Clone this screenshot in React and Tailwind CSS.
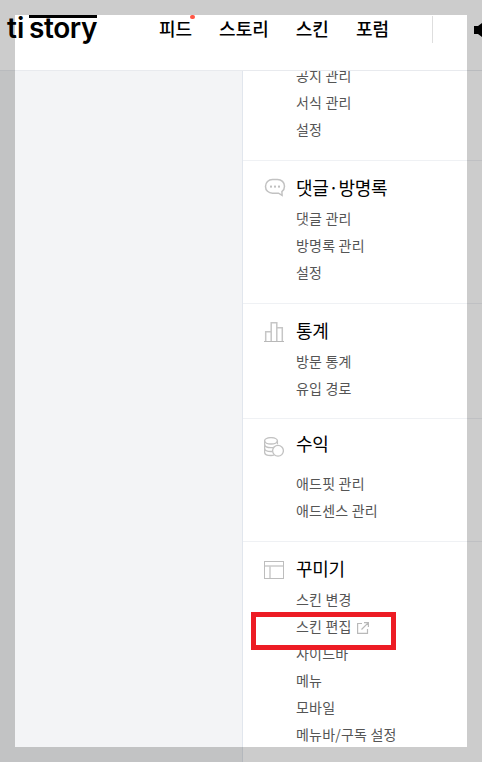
import React from "react";

const ChatIcon = () => (
  <svg width="22" height="20" viewBox="0 0 22 20" fill="none" stroke="#c2c2c2" strokeWidth="1.5">
    <path d="M8.500 1.500h5c4 0 7 2.800 7 6.800 0 2.400-1 4.200-2.600 5.400l.2 3.600-3.600-2.100H8.500c-4 0-7-2.800-7-6.800s3-6.900 7-6.900z" />
    <g fill="#c0c0c0" stroke="none">
      <rect x="6" y="7.600" width="2" height="2" />
      <rect x="10" y="7.600" width="2" height="2" />
      <rect x="14" y="7.600" width="2" height="2" />
    </g>
  </svg>
);

const ChartIcon = () => (
  <svg width="20" height="20" viewBox="0 0 20 20" fill="none" stroke="#c6c6c6">
    <path d="M1.700 19V9.700H7M7.200 19V.7h5.600V19M13 5.700h5.300V19" strokeWidth="1.500" />
    <path d="M0 19.500h20" stroke="#b8b8b8" />
  </svg>
);

const CoinsIcon = () => (
  <svg width="20" height="20" viewBox="0 0 20 20" fill="none" stroke="#c2c2c2" strokeWidth="1.300">
    <ellipse cx="7" cy="3.800" rx="6.400" ry="3.200" />
    <path d="M.6 3.800v11.500c0 1.900 2.900 3.200 6.400 3.200 1.200 0 2.200-.1 3.200-.5M13.400 3.800v3.500" />
    <path d="M.6 7.600c0 1.800 2.900 3.100 6.400 3.100 1.500 0 2.700-.2 3.700-.6M.6 11.400c0 1.800 2.900 3.100 6.400 3.100h1.400" />
    <circle cx="14" cy="13.800" r="5.400" fill="#fff" />
  </svg>
);

const LayoutIcon = () => (
  <svg width="20" height="18" viewBox="0 0 20 18" fill="none" stroke="#bdbdbd">
    <rect x=".5" y=".5" width="19" height="17" />
    <path d="M1 5h18M6 5v12" stroke="#cccccc" strokeWidth="1.500" />
  </svg>
);

const LinkIcon = () => (
  <svg width="12" height="12" viewBox="0 0 12 12" fill="none" stroke="#b9b9b9" strokeWidth="1.200">
    <path d="M5 1.500H.6v9.900h9.900V7M7 .6h4.400V5M11.400.6L4.500 7.500" />
  </svg>
);

const navItems = ["피드", "스토리", "스킨", "포럼"];

const sections = [
  {
    title: "댓글·방명록",
    icon: <ChatIcon />,
    box: "h-[143px] pt-[13px]",
    iconBox: "pt-[4px]",
    list: "mt-1",
    items: ["댓글 관리", "방명록 관리", "설정"],
  },
  {
    title: "통계",
    icon: <ChartIcon />,
    box: "h-[115px] pt-[13px]",
    iconBox: "pt-[5px]",
    list: "mt-1",
    items: ["방문 통계", "유입 경로"],
  },
  {
    title: "수익",
    icon: <CoinsIcon />,
    box: "h-[123px] pt-[11px]",
    iconBox: "pt-[7px]",
    list: "mt-[13px]",
    items: ["애드핏 관리", "애드센스 관리"],
  },
  {
    title: "꾸미기",
    icon: <LayoutIcon />,
    box: "h-[221px] pt-[13px]",
    iconBox: "pt-[6px]",
    list: "mt-1",
    items: ["스킨 변경", "스킨 편집", "사이드바", "메뉴", "모바일", "메뉴바/구독 설정"],
  },
];

const MenuItem = ({ label }) => (
  <li className="flex h-[27px] items-center whitespace-nowrap pb-[2px] text-[14px] leading-[25px] tracking-[0.2px] text-[#555]">
    {label}
    {label === "스킨 편집" && (
      <span className="ml-[5px] mt-[3px]">
        <LinkIcon />
      </span>
    )}
  </li>
);

const Header = () => (
  <header className="flex h-[71px] shrink-0 items-start border-b border-[#e8eaee] bg-white text-black">
    <a className="flex h-[45px] w-[152px] pl-[7px] pt-[15px] font-['Inter'] text-[28px] font-semibold">
      <span className="w-[22px] leading-[26px]">ti</span>
      <span className="h-[28px] w-[68px] border-t-3 border-black leading-[20px] tracking-[-0.4px]">
        story
      </span>
    </a>
    <nav className="flex gap-[27px] pl-[7px] pt-[15px] text-[18px] font-medium leading-[26px]">
      {navItems.map((item) => (
        <a key={item} className="relative">
          {item}
          {item === "피드" && (
            <i className="absolute -right-[3px] top-0 h-[4px] w-[5px] rounded-full bg-[#ff5544]" />
          )}
        </a>
      ))}
    </nav>
    <div className="ml-[43px] mt-4 h-[27px] w-px bg-[#dedede]" />
    <svg className="ml-[41px] mt-[22px] shrink-0" width="8" height="16" viewBox="0 0 8 16">
      <path d="M0 4h4l4-3v14l-4-3H0z" />
    </svg>
  </header>
);

const App = () => {
  return (
    <div className="relative flex h-[762px] w-[482px] flex-col overflow-hidden bg-[#f3f4f6] font-['Noto_Sans_CJK_KR',sans-serif]">
      <Header />
      <aside className="ml-[242px] min-h-0 flex-1 overflow-hidden border-l border-[#e1e6ed] bg-white">
        <ul className="-mt-2 h-[97px] pl-[53px]">
          {["공지 관리", "서식 관리", "설정"].map((label) => (
            <MenuItem key={label} label={label} />
          ))}
        </ul>
        {sections.map(({ title, icon, box, iconBox, list, items }) => (
          <section key={title} className={`flex border-t border-[#eff1f4] pl-[21px] ${box}`}>
            <div className={`w-8 shrink-0 ${iconBox}`}>{icon}</div>
            <div>
              <h2 className="whitespace-nowrap pb-[2px] text-[18px] leading-[26px] tracking-[-0.25px] text-black">
                {title}
              </h2>
              <ul className={list}>
                {items.map((label) => (
                  <MenuItem key={label} label={label} />
                ))}
              </ul>
            </div>
          </section>
        ))}
      </aside>

      <div className="absolute left-[251px] top-[612px] h-[38px] w-[145px] border-5 border-[#ed1c24]" />
      <div className="pointer-events-none absolute inset-0 border-[15px] border-black/20" />
    </div>
  );
};

export default App;
